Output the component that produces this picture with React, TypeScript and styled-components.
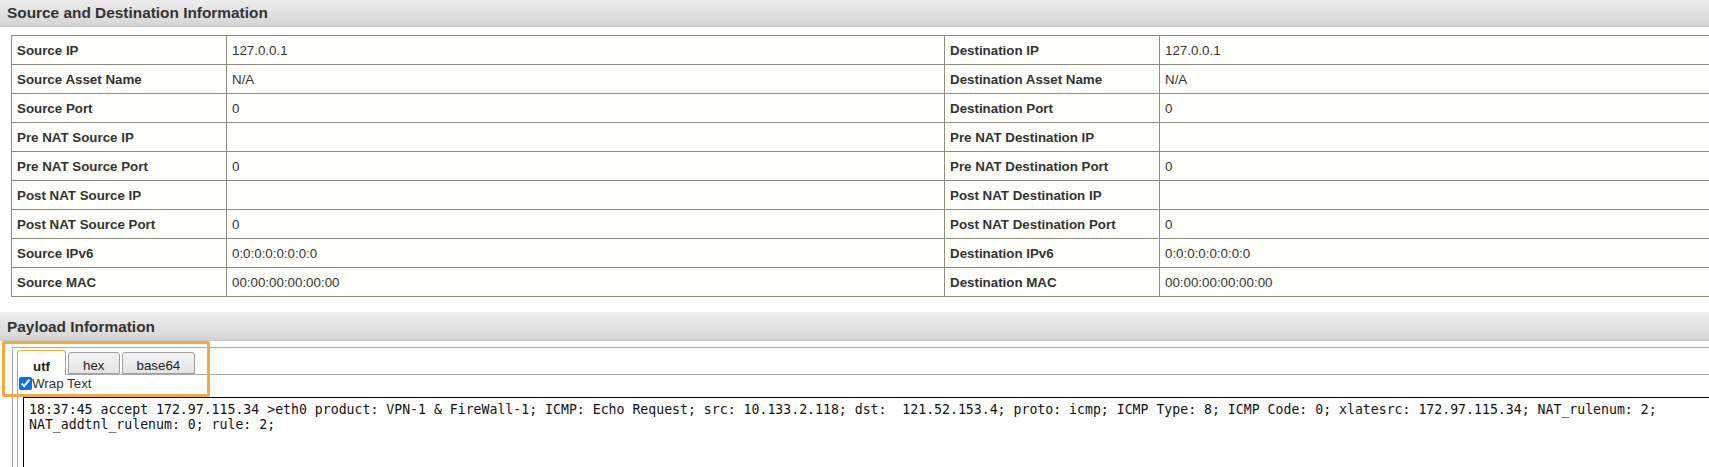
import styled, { createGlobalStyle } from "styled-components";

const GlobalStyle = createGlobalStyle`
  html, body {
    margin: 0;
    padding: 0;
    background: #ffffff;
    overflow: hidden;
  }
  body {
    font-family: "Liberation Sans", Arial, sans-serif;
    font-size: 13.33px;
    color: #333333;
  }
`;

const rows = [
  ["Source IP", "127.0.0.1", "Destination IP", "127.0.0.1"],
  ["Source Asset Name", "N/A", "Destination Asset Name", "N/A"],
  ["Source Port", "0", "Destination Port", "0"],
  ["Pre NAT Source IP", "", "Pre NAT Destination IP", ""],
  ["Pre NAT Source Port", "0", "Pre NAT Destination Port", "0"],
  ["Post NAT Source IP", "", "Post NAT Destination IP", ""],
  ["Post NAT Source Port", "0", "Post NAT Destination Port", "0"],
  ["Source IPv6", "0:0:0:0:0:0:0:0", "Destination IPv6", "0:0:0:0:0:0:0:0"],
  ["Source MAC", "00:00:00:00:00:00", "Destination MAC", "00:00:00:00:00:00"],
];

const tabs = ["utf", "hex", "base64"];

const payload =
  "18:37:45 accept 172.97.115.34 >eth0 product: VPN-1 & FireWall-1; ICMP: Echo Request; src: 10.133.2.118; dst:  121.52.153.4; proto: icmp; ICMP Type: 8; ICMP Code: 0; xlatesrc: 172.97.115.34; NAT_rulenum: 2; NAT_addtnl_rulenum: 0; rule: 2;";

const Page = styled.div`
  margin-top: -2px;
  width: 1709px;
`;

const SectionHeader = styled.h3`
  margin: 0;
  height: 29px;
  padding: 2px 0 0 7px;
  box-sizing: border-box;
  display: flex;
  align-items: center;
  font-size: 15.4px;
  font-weight: bold;
  color: #333;
  background: linear-gradient(#eeeeee, #d9d9d9 85%, #d0d0d0);
  border-bottom: 1px solid #c8c8c8;
`;

const InfoTable = styled.table`
  margin: 8px 0 0 11px;
  width: 1866px;
  border-collapse: collapse;
  table-layout: fixed;
  background: #fffffb;
`;

const Cell = styled.td<{ $label?: boolean; $w: number }>`
  width: ${(p) => p.$w}px;
  height: 29px;
  padding: 0 5px;
  border: 1px solid #8e8e80;
  font-size: 13.33px;
  font-weight: ${(p) => (p.$label ? "bold" : "normal")};
  color: #333;
  white-space: nowrap;
  box-sizing: border-box;
`;

const PayloadSection = styled.section`
  position: relative;
  margin-top: 15px;
`;

const TabsWidget = styled.div`
  margin: 6px 0 0 12px;
  border: 1px solid #a8a8a8;
  border-right: none;
  padding: 1px 0 0 4px;
`;

const TabNav = styled.div`
  display: flex;
  align-items: flex-end;
  gap: 2px;
  height: 25px;
  border-bottom: 1px solid #a8a8a8;
`;

const Tab = styled.div<{ $active?: boolean }>`
  height: ${(p) => (p.$active ? 25 : 22)}px;
  margin-bottom: ${(p) => (p.$active ? -1 : 0)}px;
  padding: 0 ${(p) => (p.$active ? 15 : 14)}px;
  padding-bottom: ${(p) => (p.$active ? 1 : 0)}px;
  display: flex;
  align-items: flex-end;
  box-sizing: border-box;
  border: 1px solid #a0a0a0;
  border-top-color: ${(p) => (p.$active ? "#f0b040" : "#a0a0a0")};
  border-bottom: ${(p) => (p.$active ? "none" : "1px solid #a0a0a0")};
  border-radius: 3px 3px 0 0;
  background: ${(p) => (p.$active ? "#ffffff" : "linear-gradient(#f4f4f4, #e4e4e4)")};
  font-size: 13.33px;
  font-weight: ${(p) => (p.$active ? "bold" : "normal")};
  color: #222;
`;

const TabPanel = styled.div`
  border-left: 1px solid #a8a8a8;
  padding: 0 0 0 1px;
`;

const WrapRow = styled.label`
  display: flex;
  align-items: center;
  height: 16px;
  font-size: 13.33px;
  color: #333;

  input {
    margin: 0;
    width: 13px;
    height: 13px;
    accent-color: #0a6cf0;
  }
`;

const PayloadBox = styled.div`
  margin: 6px 0 0 4px;
  height: 120px;
  border: 1px solid #000;
  border-right: none;
  padding: 4px 0 0 5px;
  font-family: "DejaVu Sans Mono", monospace;
  font-size: 13.2px;
  line-height: 15px;
  color: #111;
  white-space: pre-wrap;
  word-break: normal;
`;

const Highlight = styled.div`
  position: absolute;
  left: 2px;
  top: 29px;
  width: 202px;
  height: 50px;
  border: 3px solid #f2aa3a;
  border-radius: 2px;
  pointer-events: none;
`;

export default function App() {
  return (
    <>
      <GlobalStyle />
      <Page>
        <SectionHeader>Source and Destination Information</SectionHeader>
        <InfoTable>
          <tbody>
            {rows.map((r) => (
              <tr key={r[0]}>
                <Cell $label $w={215}>{r[0]}</Cell>
                <Cell $w={718}>{r[1]}</Cell>
                <Cell $label $w={215}>{r[2]}</Cell>
                <Cell $w={718}>{r[3]}</Cell>
              </tr>
            ))}
          </tbody>
        </InfoTable>

        <PayloadSection>
          <SectionHeader>Payload Information</SectionHeader>
          <TabsWidget>
            <TabNav>
              {tabs.map((t) => (
                <Tab key={t} $active={t === "utf"}>
                  {t}
                </Tab>
              ))}
            </TabNav>
            <TabPanel>
              <WrapRow>
                <input type="checkbox" defaultChecked />
                Wrap Text
              </WrapRow>
              <PayloadBox>{payload}</PayloadBox>
            </TabPanel>
          </TabsWidget>
          <Highlight />
        </PayloadSection>
      </Page>
    </>
  );
}
